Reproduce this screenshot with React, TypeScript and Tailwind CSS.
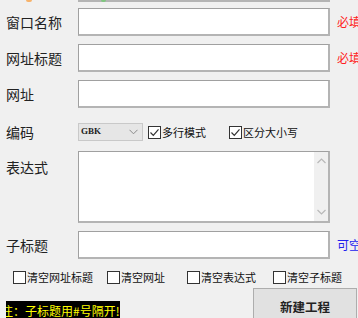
import React from 'react';

const font = { fontFamily: '"Noto Sans CJK SC", "Noto Sans", sans-serif' };

const inputCls =
    'shrink-0 h-[28px] w-[252px] bg-white border-t border-l border-[#a0a0a0] border-b-2 border-r-2 border-b-[#b4b4b4] border-r-[#b4b4b4]';

const Check: React.FC<{ checked?: boolean; label: string; className?: string }> = ({
    checked,
    label,
    className
}) => (
    <label className={'shrink-0 flex items-center whitespace-nowrap ' + (className || '')}>
        <span className="shrink-0 w-[13px] h-[13px] bg-white border border-[#333333] flex items-center justify-center">
            {checked && (
                <svg width="11" height="11" viewBox="0 0 11 11">
                    <path d="M1.5 5.5 L4.3 8.3 L9.5 2.3" fill="none" stroke="#333" strokeWidth="1.2" />
                </svg>
            )}
        </span>
        <span className="ml-[1px] text-[11px] leading-none text-[#111]">{label}</span>
    </label>
);

const Row: React.FC<{ label: string; hint?: string; hintColor?: string; mt: string }> = ({
    label,
    hint,
    hintColor,
    mt
}) => (
    <div className={'flex items-center ' + mt}>
        <span className="shrink-0 w-[78px] pl-[6px] text-[14px] leading-[20px] text-[#222]">{label}</span>
        <div className={inputCls} />
        {hint && (
            <span className={'shrink-0 ml-[7px] text-[12px] whitespace-nowrap ' + hintColor}>{hint}</span>
        )}
    </div>
);

export default function App() {
    return (
        <div className="w-[358px] h-[318px] overflow-hidden bg-[#f0f0f0] relative" style={font}>
            {/* bottom edge of the control above */}
            <div className="flex h-[2px]">
                <div className="shrink-0 w-[26px]" />
                <div className="shrink-0 w-[6px] h-[2px] bg-[#f7b36b] rounded-b-full" />
                <div className="shrink-0 w-[46px]" />
                <div className="shrink-0 w-[252px] border-b-2 border-[#b4b4b4] relative">
                    <div className="absolute left-[23px] top-0 w-[5px] h-[2px] bg-[#7fc77f] rounded-b-full" />
                </div>
            </div>

            <Row label="窗口名称" hint="必填" hintColor="text-[#ff2020]" mt="mt-[6px]" />
            <Row label="网址标题" hint="必填" hintColor="text-[#ff2020]" mt="mt-[8px]" />
            <Row label="网址" mt="mt-[8px]" />

            <div className="flex items-center mt-[15px] h-[18px]">
                <span className="shrink-0 w-[78px] pl-[6px] text-[14px] leading-[20px] text-[#222]">编码</span>
                <div className="shrink-0 w-[65px] h-[18px] bg-[#e6e6e6] border border-[#c9c9c9] flex items-center justify-between pl-[2px] pr-[4px]">
                    <span
                        className="text-[9px] font-bold text-[#222]"
                        style={{ fontFamily: '"Liberation Serif", serif' }}>
                        GBK
                    </span>
                    <svg width="9" height="6" viewBox="0 0 9 6">
                        <path d="M0.5 0.8 L4.5 4.8 L8.5 0.8" fill="none" stroke="#8a8a8a" strokeWidth="1" />
                    </svg>
                </div>
                <Check checked label="多行模式" className="ml-[5px]" />
                <Check checked label="区分大小写" className="ml-[23px]" />
            </div>

            <div className="flex items-start mt-[10px]">
                <span className="shrink-0 w-[78px] pl-[6px] pt-[6px] text-[14px] leading-[20px] text-[#222]">
                    表达式
                </span>
                <div className="shrink-0 h-[72px] w-[252px] bg-white border-t border-l border-[#a0a0a0] border-b-2 border-r-2 border-b-[#b4b4b4] border-r-[#b4b4b4] flex justify-end">
                    <div className="w-[14px] h-full bg-[#f0f0f0] flex flex-col items-center justify-between py-[6px]">
                        <svg width="9" height="6" viewBox="0 0 9 6">
                            <path d="M0.5 5 L4.5 1 L8.5 5" fill="none" stroke="#b8b8b8" strokeWidth="1.2" />
                        </svg>
                        <svg width="9" height="6" viewBox="0 0 9 6">
                            <path d="M0.5 1 L4.5 5 L8.5 1" fill="none" stroke="#b8b8b8" strokeWidth="1.2" />
                        </svg>
                    </div>
                </div>
            </div>

            <Row label="子标题" hint="可空" hintColor="text-[#2222ee]" mt="mt-[8px]" />

            <div className="flex items-center mt-[12px] pl-[13px] h-[13px]">
                <Check label="清空网址标题" />
                <Check label="清空网址" className="ml-[14px]" />
                <Check label="清空表达式" className="ml-[22px]" />
                <Check label="清空子标题" className="ml-[17px]" />
            </div>

            <div className="flex items-start mt-[4px]">
                <div className="shrink-0 mt-[13px] ml-[6px] w-[114px] h-[22px] bg-black overflow-hidden flex items-start">
                    <span className="-ml-[5px] pt-[2px] text-[12px] leading-[16px] whitespace-nowrap text-[#ffff00]">
                        注：子标题用#号隔开!
                    </span>
                </div>
                <button className="shrink-0 ml-[133px] w-[104px] h-[34px] bg-[#e1e1e1] border border-[#adadad] flex items-start justify-center pt-[10px]">
                    <span className="text-[12.5px] leading-[15px] font-bold text-[#222]">新建工程</span>
                </button>
            </div>
        </div>
    );
}
